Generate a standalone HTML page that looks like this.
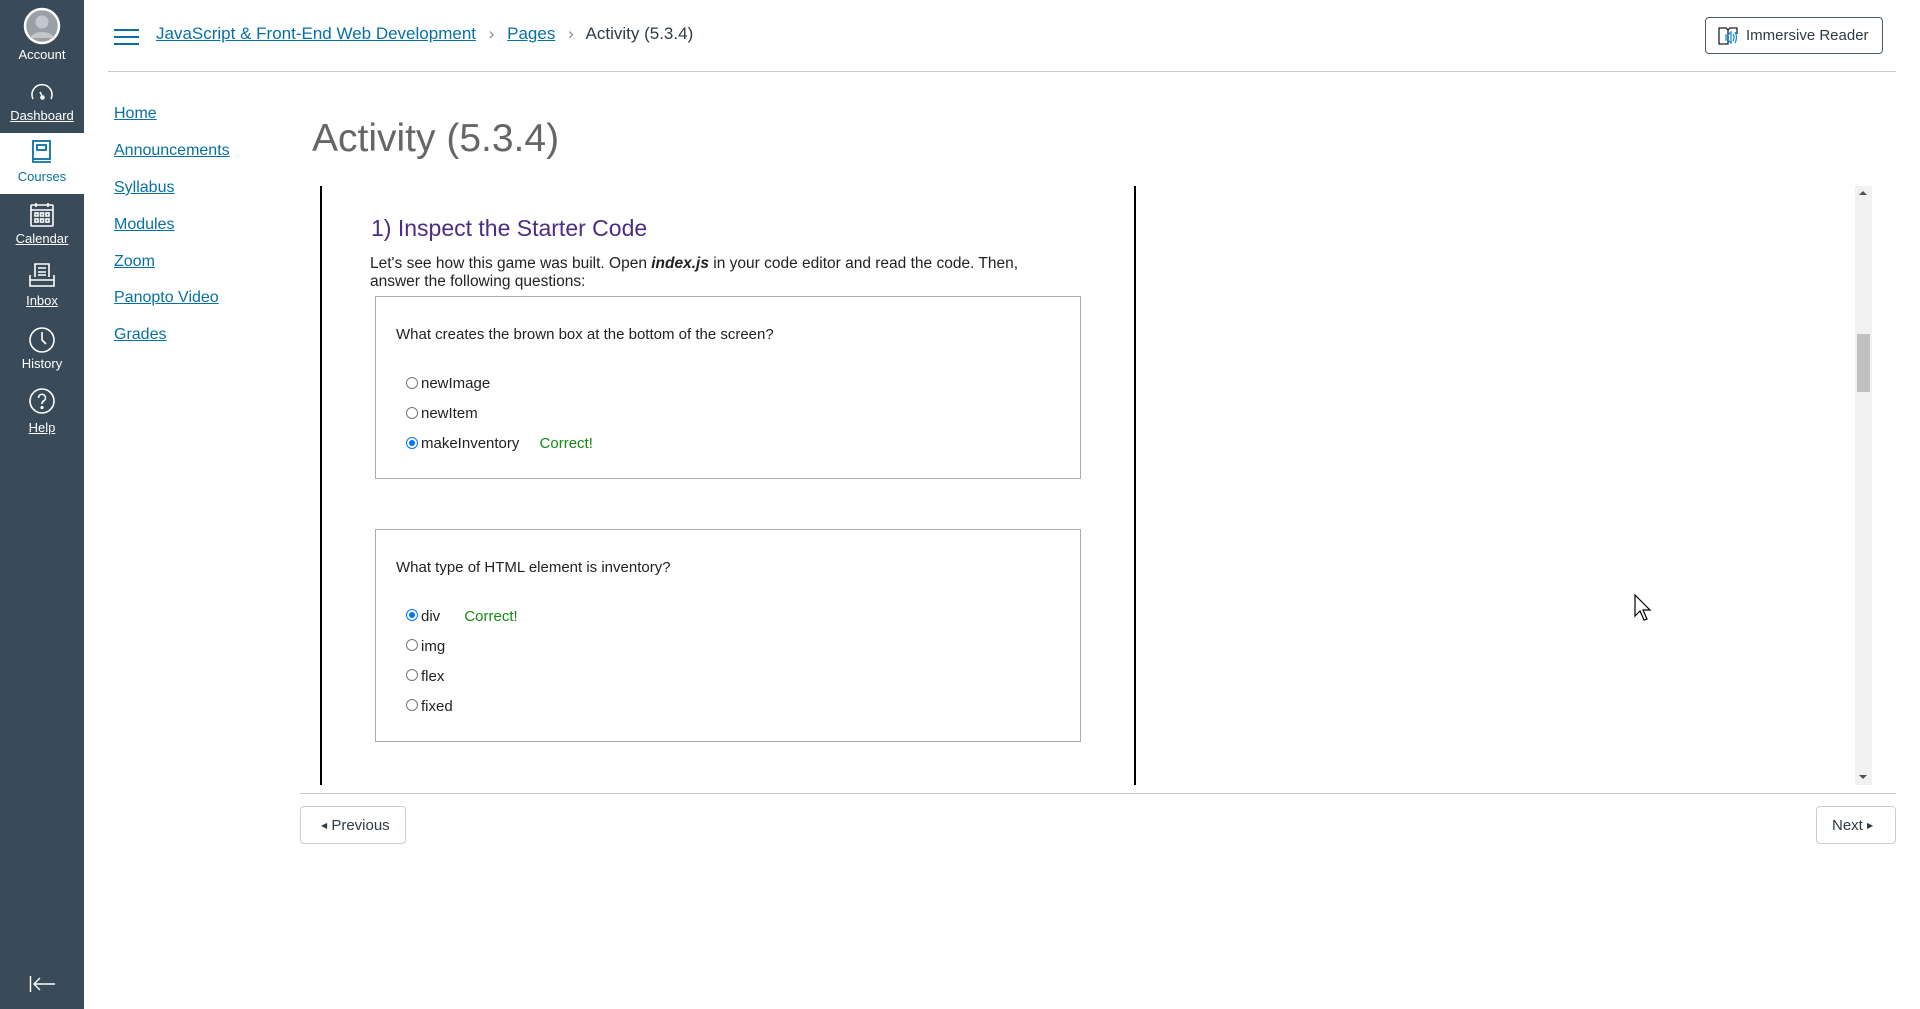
<!DOCTYPE html>
<html><head><meta charset="utf-8"><style>
*{margin:0;padding:0;box-sizing:border-box}
body{width:1920px;height:1009px;position:relative;background:#fff;font-family:"Liberation Sans",Arial,sans-serif;overflow:hidden}
.abs{position:absolute}
#side{left:0;top:0;width:84px;height:1009px;background:#394B58}
.nl{position:absolute;left:0;width:84px;text-align:center;color:#fff;font-size:13px}
.nl u{text-decoration:underline}
.ln{position:absolute;left:114px;color:#0770A3;font-size:16px;text-decoration:underline}
.q{position:absolute;font-size:15px;color:#222}
.r{position:absolute;width:12px;height:12px;border:1px solid #767676;border-radius:50%;background:#fff}
.r.on{border-color:#0075ff}
.r.on:after{content:"";position:absolute;left:2px;top:2px;width:6px;height:6px;border-radius:50%;background:#0075ff}
.ok{color:#138a13}
</style></head><body>
<div id="side" class="abs"></div>
<div class="abs" style="left:0;top:133px;width:84px;height:61px;background:#fff"></div>
<svg class="abs" style="left:22px;top:7px" width="40" height="38" viewBox="0 0 40 38"><circle cx="20" cy="19" r="17" fill="#9aa1a6" stroke="#fff" stroke-width="2.5"/><circle cx="20" cy="15" r="6.5" fill="#c3c7ca"/><path d="M8 31c3-8 21-8 24 0" fill="#c3c7ca"/></svg>
<div class="nl" style="top:47px">Account</div>
<svg class="abs" style="left:29px;top:83px" width="26" height="18" viewBox="0 0 26 18" fill="none" stroke="#fff" stroke-width="1.5"><path d="M4 16a10 10 0 1 1 18 0"/><path d="M11 9l3 6"/><circle cx="13.5" cy="14.5" r="1.5"/></svg>
<div class="nl" style="top:108px"><u>Dashboard</u></div>
<svg class="abs" style="left:32px;top:140px" width="20" height="24" viewBox="0 0 20 24" fill="none" stroke="#0770A3" stroke-width="1.8"><rect x="1" y="1" width="17" height="18"/><rect x="5" y="5" width="9" height="5"/><path d="M1 19v3h18"/></svg>
<div class="nl" style="top:169px;color:#0770A3">Courses</div>
<svg class="abs" style="left:30px;top:202px" width="24" height="25" viewBox="0 0 24 25" fill="none" stroke="#fff" stroke-width="1.6"><rect x="1" y="3" width="22" height="21" rx="1"/><path d="M1 8h22M6 1v4M18 1v4"/><rect x="5" y="11" width="3" height="3"/><rect x="10.5" y="11" width="3" height="3"/><rect x="16" y="11" width="3" height="3"/><rect x="5" y="17" width="3" height="3"/><rect x="10.5" y="17" width="3" height="3"/><rect x="16" y="17" width="3" height="3"/></svg>
<div class="nl" style="top:231px"><u>Calendar</u></div>
<svg class="abs" style="left:29px;top:263px" width="26" height="25" viewBox="0 0 26 25" fill="none" stroke="#fff" stroke-width="1.6"><path d="M6 14V1h14v13"/><path d="M9 5h8M9 9h8M9 12h8"/><path d="M1 12v11h24V12"/><path d="M1 17h24"/></svg>
<div class="nl" style="top:293px"><u>Inbox</u></div>
<svg class="abs" style="left:29px;top:327px" width="26" height="26" viewBox="0 0 26 26" fill="none" stroke="#fff" stroke-width="1.6"><circle cx="13" cy="13" r="12"/><path d="M13 5v8l4 4"/></svg>
<div class="nl" style="top:356px">History</div>
<svg class="abs" style="left:29px;top:388px" width="26" height="26" viewBox="0 0 26 26" fill="none" stroke="#fff" stroke-width="1.6"><circle cx="13" cy="13" r="12"/><path d="M9.5 10a3.5 3.5 0 1 1 5 3c-1.2.7-1.5 1.3-1.5 3"/><circle cx="13" cy="19.5" r=".8" fill="#fff"/></svg>
<div class="nl" style="top:420px"><u>Help</u></div>
<svg class="abs" style="left:29px;top:975px" width="28" height="18" viewBox="0 0 28 18" fill="none" stroke="#fff" stroke-width="1.4"><path d="M1.5 1v16M5 9h21M11 3L5 9l6 6"/></svg>

<svg class="abs" style="left:114px;top:28px" width="25" height="18" viewBox="0 0 25 18" stroke="#0770A3" stroke-width="2"><path d="M0 2h25M0 9h25M0 16h25"/></svg>
<div class="abs" style="left:156px;top:24px;font-size:17px;color:#2D3B45;white-space:nowrap"><span style="color:#0770A3;text-decoration:underline">JavaScript &amp; Front-End Web Development</span> <span style="color:#888;margin:0 8px">›</span> <span style="color:#0770A3;text-decoration:underline">Pages</span> <span style="color:#888;margin:0 8px">›</span> Activity (5.3.4)</div>
<div class="abs" style="left:1705px;top:17px;width:178px;height:37px;border:1px solid #4a5a66;border-radius:4px;font-size:15px;color:#2D3B45;padding:9px 0 0 40px">Immersive Reader</div>
<svg class="abs" style="left:1718px;top:26px" width="22" height="20" viewBox="0 0 22 20" fill="none" stroke-width="1.3"><path d="M1 2h7l2 2v14H1z M10 4l2-2h7v6" stroke="#222"/><path d="M8 9h2l3-3v11l-3-3H8z M15 8q2 3.5 0 7M17 6q3 5.5 0 11" stroke="#1a8fe0"/></svg>
<div class="abs" style="left:108px;top:71px;width:1788px;height:1px;background:#c7cdd1"></div>

<div class="ln" style="top:105px">Home</div>
<div class="ln" style="top:142px">Announcements</div>
<div class="ln" style="top:179px">Syllabus</div>
<div class="ln" style="top:216px">Modules</div>
<div class="ln" style="top:253px">Zoom</div>
<div class="ln" style="top:289px">Panopto Video</div>
<div class="ln" style="top:326px">Grades</div>

<div class="abs" style="left:312px;top:117px;font-size:39px;font-weight:300;color:#666">Activity (5.3.4)</div>

<div class="abs" style="left:320px;top:186px;width:2px;height:599px;background:#000"></div>
<div class="abs" style="left:1134px;top:186px;width:2px;height:599px;background:#000"></div>
<div class="abs" style="left:1855px;top:186px;width:17px;height:599px;background:#f1f1f1"></div>
<div class="abs" style="left:1857px;top:334px;width:13px;height:58px;background:#c1c1c1"></div>
<div class="abs" style="left:1859px;top:191px;width:0;height:0;border:4px solid transparent;border-bottom-color:#505050;border-top:0"></div>
<div class="abs" style="left:1859px;top:775px;width:0;height:0;border:4px solid transparent;border-top-color:#505050;border-bottom:0"></div>

<div class="abs" style="left:371px;top:215px;font-size:23px;color:#4B2E83">1) Inspect the Starter Code</div>
<div class="abs" style="left:370px;top:255px;width:700px;font-size:15.5px;line-height:18px;color:#222">Let's see how this game was built. Open <b><i>index.js</i></b> in your code editor and read the code. Then, answer the following questions:</div>

<div class="abs" style="left:375px;top:296px;width:706px;height:183px;border:1px solid #aaa"></div>
<div class="q" style="left:396px;top:326px">What creates the brown box at the bottom of the screen?</div>
<div class="r" style="left:406px;top:377px"></div><div class="q" style="left:421px;top:375px">newImage</div>
<div class="r" style="left:406px;top:407px"></div><div class="q" style="left:421px;top:405px">newItem</div>
<div class="r on" style="left:406px;top:437px"></div><div class="q" style="left:421px;top:435px">makeInventory <span class="ok" style="margin-left:16px">Correct!</span></div>

<div class="abs" style="left:375px;top:529px;width:706px;height:213px;border:1px solid #aaa"></div>
<div class="q" style="left:396px;top:559px">What type of HTML element is inventory?</div>
<div class="r on" style="left:406px;top:609px"></div><div class="q" style="left:421px;top:608px">div <span class="ok" style="margin-left:20px">Correct!</span></div>
<div class="r" style="left:406px;top:639px"></div><div class="q" style="left:421px;top:638px">img</div>
<div class="r" style="left:406px;top:669px"></div><div class="q" style="left:421px;top:668px">flex</div>
<div class="r" style="left:406px;top:699px"></div><div class="q" style="left:421px;top:698px">fixed</div>

<svg class="abs" style="left:1634px;top:594px" width="20" height="28" viewBox="0 0 20 28"><path d="M1 1v21l5-5 4 9 3-1-4-9h7z" fill="#fff" stroke="#000" stroke-width="1.2"/></svg>

<div class="abs" style="left:300px;top:793px;width:1596px;height:1px;background:#c7cdd1"></div>
<div class="abs" style="left:300px;top:806px;width:106px;height:38px;border:1px solid #c7cdd1;border-radius:4px;font-size:15px;color:#2D3B45;padding:10px 0 0 20px"><span style="font-size:8px;vertical-align:2px">◀</span> Previous</div>
<div class="abs" style="left:1816px;top:806px;width:80px;height:38px;border:1px solid #c7cdd1;border-radius:4px;font-size:15px;color:#2D3B45;padding:10px 0 0 15px">Next <span style="font-size:8px;vertical-align:2px">▶</span></div>
</body></html>
